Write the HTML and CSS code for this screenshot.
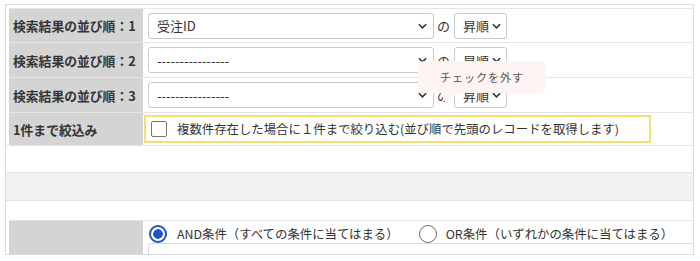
FILE: index.html
```html
<!DOCTYPE html>
<html lang="ja">
<head>
<meta charset="utf-8">
<link rel="stylesheet" href="styles.css">
</head>
<body>
<div class="frame">
  <div class="row r1">
    <div class="label">検索結果の並び順：1</div>
    <div class="value">
      <div class="select wide"><span>受注ID</span><svg class="chev" viewBox="0 0 10 6"><path d="M1 1 L5 5 L9 1"/></svg></div>
      <span class="no">の</span>
      <div class="select narrow"><span>昇順</span><svg class="chev" viewBox="0 0 10 6"><path d="M1 1 L5 5 L9 1"/></svg></div>
    </div>
  </div>
  <div class="row r2">
    <div class="label">検索結果の並び順：2</div>
    <div class="value">
      <div class="select wide"><span>----------------</span><svg class="chev" viewBox="0 0 10 6"><path d="M1 1 L5 5 L9 1"/></svg></div>
      <span class="no">の</span>
      <div class="select narrow"><span>昇順</span><svg class="chev" viewBox="0 0 10 6"><path d="M1 1 L5 5 L9 1"/></svg></div>
    </div>
  </div>
  <div class="row r3">
    <div class="label">検索結果の並び順：3</div>
    <div class="value">
      <div class="select wide"><span>----------------</span><svg class="chev" viewBox="0 0 10 6"><path d="M1 1 L5 5 L9 1"/></svg></div>
      <span class="no">の</span>
      <div class="select narrow"><span>昇順</span><svg class="chev" viewBox="0 0 10 6"><path d="M1 1 L5 5 L9 1"/></svg></div>
    </div>
  </div>
  <div class="row r4">
    <div class="label">1件まで絞込み</div>
    <div class="value">
      <div class="highlight">
        <span class="checkbox"></span>
        <span class="text">複数件存在した場合に１件まで絞り込む(並び順で先頭のレコードを取得します)</span>
      </div>
    </div>
  </div>
  <div class="blank b1"></div>
  <div class="band"></div>
  <div class="blank b2"></div>
  <div class="row r5">
    <div class="label"></div>
    <div class="value col">
      <div class="radios">
        <span class="radio on"></span>
        <span class="text">AND条件（すべての条件に当てはまる）</span>
        <span class="radio off"></span>
        <span class="text">OR条件（いずれかの条件に当てはまる）</span>
      </div>
      <div class="subbox"></div>
    </div>
  </div>
  <div class="tooltip">チェックを外す</div>
</div>
</body>
</html>
```

FILE: styles.css
```css
html, body {
  margin: 0;
  padding: 0;
  background: #ffffff;
}
body {
  font-family: "Noto Sans CJK JP", "Noto Sans", sans-serif;
  color: #333333;
}
.frame {
  position: relative;
  box-sizing: border-box;
  margin: 4px 0 0 5px;
  width: 689px;
  height: 251px;
  border: 1px solid #dcdcdc;
  padding-top: 3px;
  overflow: hidden;
}
.row {
  display: flex;
  margin-left: 3px;
  border-top: 1px solid #e6e6e6;
}
.r1 { height: 33px; }
.r2, .r3 { height: 34px; }
.r4 { height: 32px; }
.r5 { height: 40px; }
.label {
  width: 130px;
  flex: none;
  background: #d4d4d4;
  font-size: 12.8px;
  font-weight: bold;
  padding-left: 4px;
  display: flex;
  align-items: center;
  margin-right: 1px;
  color: #333;
}
.value {
  flex: 1;
  display: flex;
  align-items: center;
  padding-left: 4px;
  font-size: 12.4px;
}
.select {
  box-sizing: border-box;
  height: 26px;
  border: 1px solid #c9c9c9;
  border-radius: 3px;
  display: flex;
  align-items: center;
  justify-content: space-between;
  padding: 0 6px 0 8px;
  font-size: 13px;
  background: #fff;
}
.select.wide { width: 286px; }
.select.narrow { width: 53px; padding-right: 5px; }
.chev {
  width: 9px;
  height: 6px;
  fill: none;
  stroke: #333;
  stroke-width: 1.7;
}
.no {
  font-size: 13px;
  margin: 0 4px 0 3px;
}
.highlight {
  box-sizing: border-box;
  width: 507px;
  height: 28px;
  margin-left: -4px;
  border: 2px solid #f4e06f;
  display: flex;
  align-items: center;
  padding-left: 5px;
}
.checkbox {
  box-sizing: border-box;
  width: 16px;
  height: 16px;
  border: 1.5px solid #767676;
  border-radius: 2px;
  margin-right: 10px;
}
.blank {
  border-top: 1px solid #e3e3e3;
}
.b1 { height: 26px; }
.b2 { height: 19px; }
.band {
  height: 27px;
  background: #f2f2f2;
  border-top: 1px solid #e3e3e3;
}
.value.col {
  flex-direction: column;
  align-items: stretch;
  padding-left: 4px;
  padding-top: 4px;
}
.radios {
  height: 22px;
  display: flex;
  align-items: center;
  padding-left: 1px;
}
.radio {
  box-sizing: border-box;
  width: 18px;
  height: 18px;
  border-radius: 50%;
  flex: none;
  margin-right: 10px;
}
.radio.on {
  border: 2px solid #1a55c9;
  background: radial-gradient(circle, #1a55c9 0 4.5px, #fff 5px);
}
.radio.off {
  border: 1.5px solid #6a6a6a;
  margin-left: 20px;
  margin-right: 9px;
}
.subbox {
  height: 20px;
  border: 1px solid #dddddd;
  border-right: none;
  border-radius: 4px 0 0 0;
}
.tooltip {
  position: absolute;
  left: 412px;
  top: 56px;
  width: 128px;
  height: 32px;
  background: #fdf4f3;
  border-radius: 6px;
  font-size: 11px;
  letter-spacing: 1px;
  color: #555;
  display: flex;
  align-items: center;
  justify-content: center;
}
.tooltip::after {
  content: "";
  position: absolute;
  left: 22px;
  top: 31px;
  width: 18px;
  height: 12px;
  background: #fdf4f3;
  clip-path: polygon(0 0, 100% 0, 33% 100%);
}
```
